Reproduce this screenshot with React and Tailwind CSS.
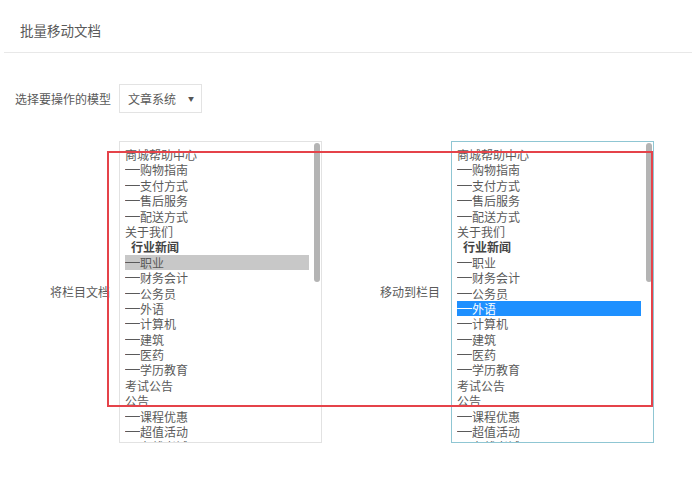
import React from "react";

const items = [
  { label: "商城帮助中心" },
  { label: "购物指南", sub: true },
  { label: "支付方式", sub: true },
  { label: "售后服务", sub: true },
  { label: "配送方式", sub: true },
  { label: "关于我们" },
  { label: "行业新闻", bold: true },
  { label: "职业", sub: true },
  { label: "财务会计", sub: true },
  { label: "公务员", sub: true },
  { label: "外语", sub: true },
  { label: "计算机", sub: true },
  { label: "建筑", sub: true },
  { label: "医药", sub: true },
  { label: "学历教育", sub: true },
  { label: "考试公告" },
  { label: "公告" },
  { label: "课程优惠", sub: true },
  { label: "超值活动", sub: true },
  { label: "在线考试", sub: true },
];

function ListBox({ selected, selectedClass, boxClass }) {
  return (
    <div className={`flex h-[302px] w-[203px] overflow-hidden border bg-white ${boxClass}`}>
      <div className="flex-1 px-[5px] pt-[5px]">
        {items.map((it, i) => (
          <div
            key={i}
            className={`flex h-[15.4px] items-center whitespace-nowrap text-[12px] leading-[15.4px] ${
              it.bold ? "pl-[6px] font-bold text-[#444]" : ""
            } ${i === selected ? selectedClass : ""}`}
          >
            {it.sub && (
              <span
                className="inline-block w-[15px] origin-left scale-x-125 overflow-visible"
                style={{ fontFamily: '"Liberation Sans", sans-serif' }}
              >
                —
              </span>
            )}
            <span>{it.label}</span>
          </div>
        ))}
      </div>
      <div className="w-[7px] pt-[1px]">
        <div className="h-[139px] w-[6px] rounded-full bg-[#b4b4b4]" />
      </div>
    </div>
  );
}

export default function App() {
  return (
    <div
      className="relative h-[479px] w-[692px] bg-white text-[#5a5a5a]"
      style={{ fontFamily: '"Noto Sans CJK SC", "Microsoft YaHei", sans-serif' }}
    >
      <div className="pl-[20px] pt-[20px] pb-[12px] text-[13.5px] leading-[20px]">批量移动文档</div>
      <div className="ml-[4px] border-b border-[#e8e8e8]" />

      {/* model select */}
      <div className="mt-[31px] flex items-center pl-[15px]">
        <span className="w-[104px] text-[12px]">选择要操作的模型</span>
        <div className="flex h-[29px] w-[83px] items-center justify-between border border-[#e3e3e3] pl-[8px] pr-[7px] text-[12px]">
          <span>文章系统</span>
          <span className="text-[6px] text-[#555]">▼</span>
        </div>
      </div>

      {/* columns */}
      <div className="mt-[28px] flex items-center">
        <div className="w-[110px] text-right text-[12px]">将栏目文档</div>
        <div className="ml-[9px]">
          <ListBox selected={7} selectedClass="bg-[#c8c8c8]" boxClass="border-[#e2e2e2]" />
        </div>
        <div className="w-[118px] text-right text-[12px]">移动到栏目</div>
        <div className="ml-[11px]">
          <ListBox selected={10} selectedClass="bg-[#1e90ff] text-white" boxClass="border-[#8fc6d3]" />
        </div>
      </div>

      {/* annotation frame */}
      <div className="pointer-events-none absolute left-[107px] top-[151px] h-[256px] w-[546px] border-2 border-[#e5434a]" />
    </div>
  );
}
